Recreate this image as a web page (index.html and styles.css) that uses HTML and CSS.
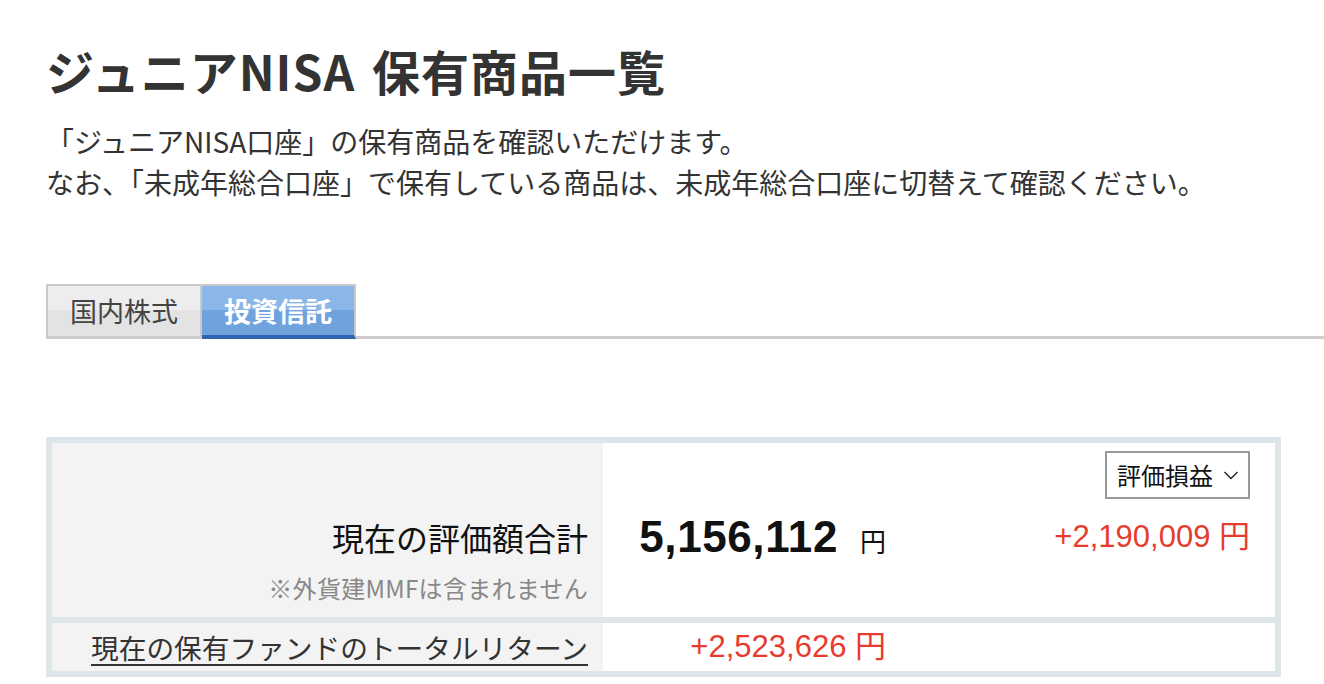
FILE: index.html
```html
<!DOCTYPE html>
<html lang="ja">
<head>
<meta charset="utf-8">
<title>ジュニアNISA 保有商品一覧</title>
<link rel="stylesheet" href="styles.css">
</head>
<body>
<div class="page">
  <h1 class="title">ジュニアNISA 保有商品一覧</h1>
  <p class="lead">「ジュニアNISA口座」の保有商品を確認いただけます。<br>なお、「未成年総合口座」で保有している商品は、未成年総合口座に切替えて確認ください。</p>

  <div class="tabs">
    <a class="tab">国内株式</a>
    <a class="tab tab-active">投資信託</a>
  </div>

  <div class="summary">
    <div class="cell label-cell">
      <div class="label">現在の評価額合計</div>
      <div class="note">※外貨建MMFは含まれません</div>
    </div>
    <div class="cell value-cell">
      <span class="num-big">5,156,112</span><span class="yen">円</span>
    </div>
    <div class="cell side-cell">
      <div class="select">
        <span>評価損益</span>
        <svg class="chev" width="16" height="10" viewBox="0 0 16 10"><polyline points="1.5,2 8,8.5 14.5,2" fill="none" stroke="#222" stroke-width="1.4"/></svg>
      </div>
      <div class="red side-red">+2,190,009 円</div>
    </div>

    <div class="cell label-cell2">
      <a class="link">現在の保有ファンドのトータルリターン</a>
    </div>
    <div class="cell value-cell2">
      <span class="red">+2,523,626 円</span>
    </div>
    <div class="cell"></div>
  </div>
</div>
</body>
</html>
```

FILE: styles.css
```css
html, body {
  margin: 0;
  padding: 0;
  background: #fff;
}

body {
  font-family: "Noto Sans CJK JP", sans-serif;
  color: #333;
}

.page {
  padding-left: 46px;
}

.title {
  margin: 42px 0 0;
  font-size: 48px;
  line-height: 56px;
  font-weight: 700;
  letter-spacing: 1px;
  word-spacing: 5px;
  color: #333;
}

.lead {
  margin: 23px 0 0;
  font-size: 28px;
  line-height: 41px;
  color: #333;
}

.tabs {
  margin-top: 81px;
  display: flex;
  align-items: flex-start;
  border-bottom: 3px solid #cccccc;
  height: 52px;
}

.tab {
  box-sizing: border-box;
  width: 154px;
  height: 52px;
  border-top: 2px solid #c9c9c9;
  border-right: 2px solid #c9c9c9;
  text-align: center;
  font-size: 27px;
  line-height: 50px;
  color: #444;
  background: linear-gradient(#ededed 0, #ededed 48%, #e3e3e3 48%, #e3e3e3 100%);
}

.tab:first-child {
  width: 156px;
  border-left: 2px solid #c9c9c9;
}

.tab-active {
  height: 55px;
  margin-bottom: -3px;
  border-bottom: 4px solid #2e65b3;
  color: #fff;
  font-weight: 700;
  line-height: 49px;
  background: linear-gradient(#8bb7e8 0, #8bb7e8 48%, #70a3dd 48%, #70a3dd 100%);
}

.summary {
  margin-top: 98px;
  box-sizing: border-box;
  width: 1235px;
  border: 6px solid #dfe6ea;
  background: #dfe6ea;
  display: grid;
  grid-template-columns: 551px 283px 1fr;
  grid-template-rows: 174px 48px;
  row-gap: 6px;
}

.cell {
  background: #fff;
}

.label-cell {
  background: #f3f3f3;
  display: flex;
  flex-direction: column;
  align-items: flex-end;
  justify-content: flex-end;
  padding: 0 15px 12px 0;
}

.label {
  font-size: 32px;
  line-height: 44px;
  color: #111;
}

.note {
  margin-top: 12px;
  font-size: 24px;
  line-height: 34px;
  letter-spacing: 0.3px;
  color: #888;
}

.value-cell {
  padding-top: 72px;
  text-align: right;
  line-height: 44px;
}

.num-big {
  font-family: "Liberation Sans", "Noto Sans CJK JP", sans-serif;
  font-weight: 700;
  font-size: 44px;
  line-height: 44px;
  letter-spacing: 0.6px;
  color: #111;
}

.yen {
  margin-left: 22px;
  font-size: 26px;
  color: #111;
}

.side-cell {
  display: flex;
  flex-direction: column;
  align-items: flex-end;
  padding: 8px 25px 0 0;
}

.select {
  box-sizing: border-box;
  height: 48px;
  border: 2px solid #999;
  padding: 0 9px 0 10px;
  display: flex;
  align-items: center;
  gap: 10px;
  font-size: 24px;
  line-height: 44px;
  color: #111;
  background: #fff;
}

.chev {
  display: block;
}

.red {
  font-family: "Liberation Sans", "Noto Sans CJK JP", sans-serif;
  font-size: 31px;
  color: #e73b2e;
}

.side-red {
  margin-top: 16px;
  line-height: 44px;
}

.label-cell2 {
  background: #f3f3f3;
  display: flex;
  align-items: center;
  justify-content: flex-end;
  padding-right: 15px;
}

.link {
  font-size: 27.7px;
  line-height: 48px;
  color: #333;
  text-decoration: underline;
  text-underline-offset: 5px;
  text-decoration-thickness: 1.5px;
}

.value-cell2 {
  text-align: right;
  line-height: 48px;
}
```
